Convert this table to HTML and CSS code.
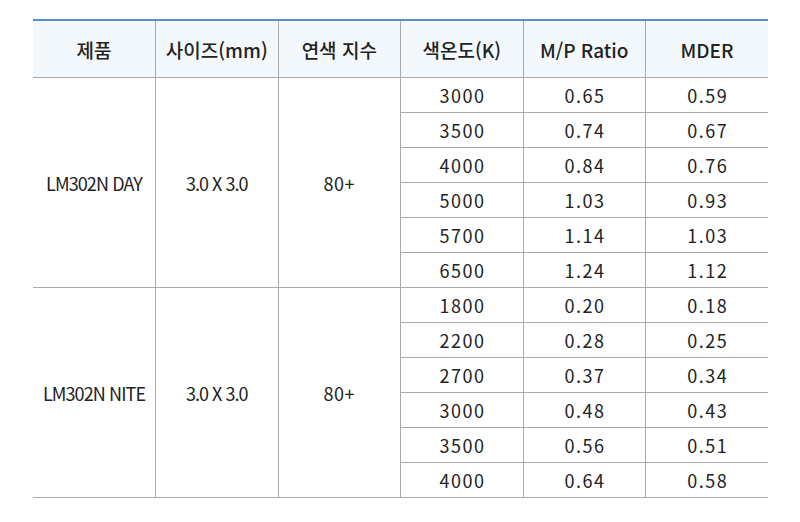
FILE: index.html
```html
<!DOCTYPE html>
<html lang="ko">
<head>
<meta charset="utf-8">
<link rel="stylesheet" href="styles.css">
</head>
<body>
<div class="wrap">
<table class="spec">
<colgroup><col><col><col><col><col><col></colgroup>
<thead>
<tr><th>제품</th><th>사이즈(mm)</th><th>연색 지수</th><th>색온도(K)</th><th>M/P Ratio</th><th>MDER</th></tr>
</thead>
<tbody>
<tr><td rowspan="6" class="name">LM302N DAY</td><td rowspan="6" class="size">3.0 X 3.0</td><td rowspan="6" class="cri">80+</td><td>3000</td><td>0.65</td><td>0.59</td></tr>
<tr><td>3500</td><td>0.74</td><td>0.67</td></tr>
<tr><td>4000</td><td>0.84</td><td>0.76</td></tr>
<tr><td>5000</td><td>1.03</td><td>0.93</td></tr>
<tr><td>5700</td><td>1.14</td><td>1.03</td></tr>
<tr><td>6500</td><td>1.24</td><td>1.12</td></tr>
<tr><td rowspan="6" class="name">LM302N NITE</td><td rowspan="6" class="size">3.0 X 3.0</td><td rowspan="6" class="cri">80+</td><td>1800</td><td>0.20</td><td>0.18</td></tr>
<tr><td>2200</td><td>0.28</td><td>0.25</td></tr>
<tr><td>2700</td><td>0.37</td><td>0.34</td></tr>
<tr><td>3000</td><td>0.48</td><td>0.43</td></tr>
<tr><td>3500</td><td>0.56</td><td>0.51</td></tr>
<tr><td>4000</td><td>0.64</td><td>0.58</td></tr>
</tbody>
</table>
</div>
</body>
</html>
```
FILE: styles.css
```css
html, body { margin: 0; padding: 0; background: #fff; }
.wrap { padding: 19px 0 0 33px; }
.spec {
  width: 735px;
  table-layout: fixed;
  border-collapse: collapse;
  font-family: "Noto Sans CJK KR", "Noto Sans", sans-serif;
  color: #222;
  border-top: 2px solid #5b8fc7;
}
.spec col { width: 122.5px; }
.spec th {
  height: 56px;
  padding: 0;
  background: #f3f8fd;
  font-size: 19px;
  font-weight: 500;
  text-align: center;
  border-left: 1px solid #aaa;
  border-bottom: 1px solid #aaa;
}
.spec th:first-child, .spec td.name { border-left: none; }
.spec td {
  height: 34px;
  padding: 0;
  font-size: 18px;
  line-height: 20px;
  letter-spacing: 1.5px;
  text-indent: 1.5px;
  text-align: center;
  border-left: 1px solid #aaa;
  border-bottom: 1px solid #aaa;
}
.spec td.name { letter-spacing: -0.9px; text-indent: 0; }
.spec td.size { letter-spacing: -1px; text-indent: 0; }
.spec td.cri { letter-spacing: 0.5px; text-indent: 0; }
```
